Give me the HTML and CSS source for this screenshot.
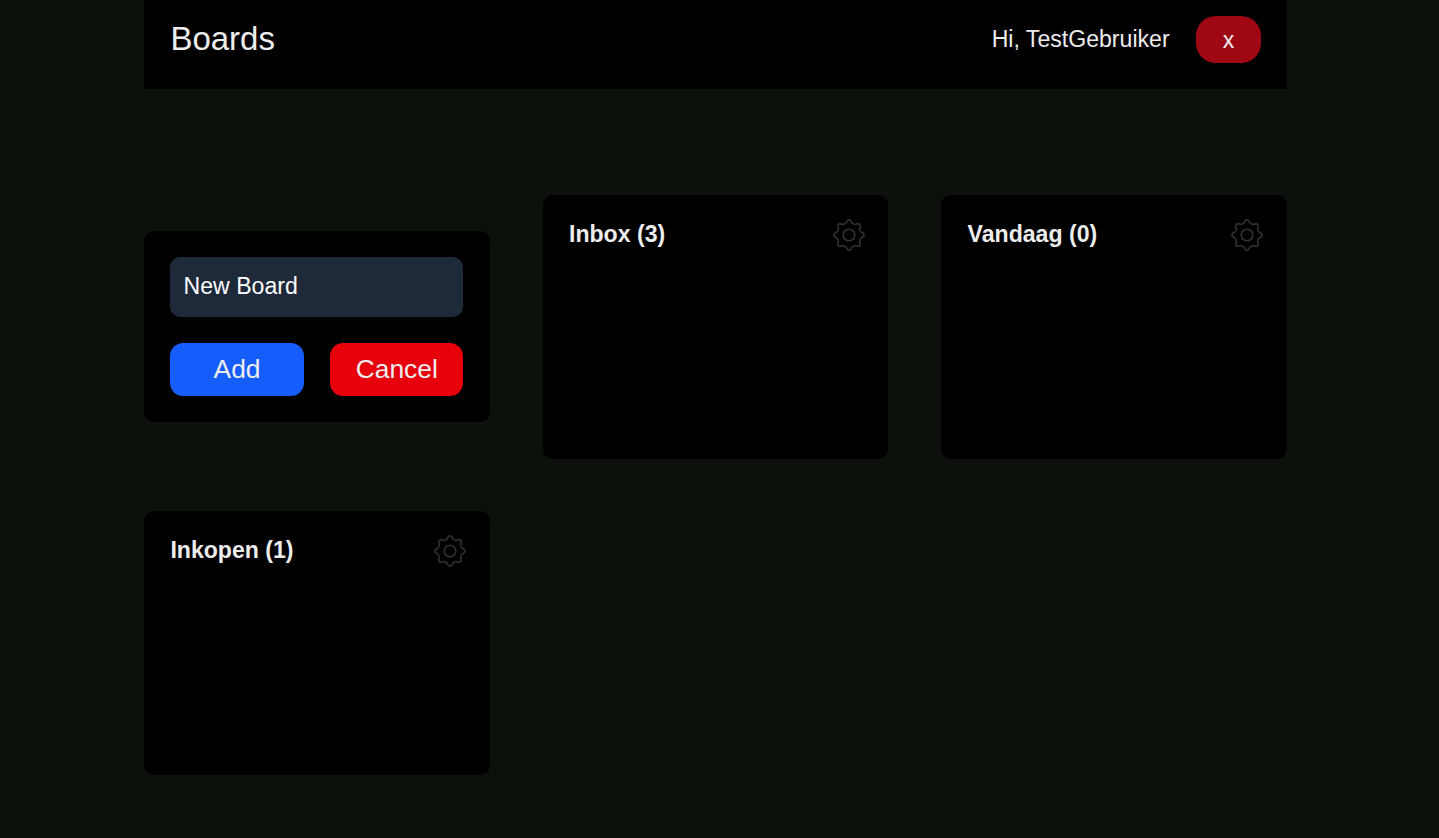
FILE: index.html
```html
<!DOCTYPE html>
<html lang="nl">
<head>
<meta charset="utf-8">
<title>Boards</title>
<link rel="stylesheet" href="styles.css">
</head>
<body>
<svg class="sprite" aria-hidden="true">
  <defs>
    <path id="tooth" d="M-4.55-10.98C-3.4-11.45-2.75-12.1-2.25-13.4Q-1.5-15.1 0-15.1Q1.5-15.1 2.25-13.4C2.75-12.1 3.4-11.45 4.55-10.98"/>
    <symbol id="gear" viewBox="-17 -17 34 34">
      <circle r="5.8"/>
      <use href="#tooth"/>
      <use href="#tooth" transform="rotate(45)"/>
      <use href="#tooth" transform="rotate(90)"/>
      <use href="#tooth" transform="rotate(135)"/>
      <use href="#tooth" transform="rotate(180)"/>
      <use href="#tooth" transform="rotate(225)"/>
      <use href="#tooth" transform="rotate(270)"/>
      <use href="#tooth" transform="rotate(315)"/>
    </symbol>
  </defs>
</svg>
<div class="page">
  <header class="header">
    <h1 class="title">Boards</h1>
    <div class="user">
      <span>Hi, TestGebruiker</span>
      <button class="logout">x</button>
    </div>
  </header>
  <main class="boards">
    <form class="card new-board">
      <input class="name" type="text" value="New Board">
      <div class="actions">
        <button class="button add" type="button">Add</button>
        <button class="button cancel" type="button">Cancel</button>
      </div>
    </form>
    <section class="card board">
      <h2 class="board-title">Inbox (3)</h2>
      <svg class="gear"><use href="#gear"/></svg>
    </section>
    <section class="card board">
      <h2 class="board-title">Vandaag (0)</h2>
      <svg class="gear"><use href="#gear"/></svg>
    </section>
    <section class="card board">
      <h2 class="board-title">Inkopen (1)</h2>
      <svg class="gear"><use href="#gear"/></svg>
    </section>
  </main>
</div>
</body>
</html>
```
FILE: styles.css
```css
* {
  box-sizing: border-box;
  margin: 0;
}

body {
  min-height: 100vh;
  background: #0c110c;
  color: #ededed;
  font-family: "Liberation Sans", Arial, sans-serif;
}

button,
input {
  border: 0;
  color: inherit;
  font-family: inherit;
}

.sprite {
  display: block;
  width: 0;
  height: 0;
}

.page {
  width: 1143px;
  margin-left: 144px;
}

.header {
  display: flex;
  justify-content: space-between;
  height: 89px;
  padding: 16px 26.4px 0;
  background: #000;
}

.title {
  font-size: 33px;
  font-weight: 400;
  line-height: 46px;
}

.user {
  display: flex;
  gap: 26px;
  font-size: 23.1px;
  line-height: 46px;
}

.logout {
  width: 65px;
  height: 47px;
  padding: 2px 0 0 1px;
  border-radius: 20px;
  background: #9f0712;
  font-size: 23.1px;
}

.boards {
  display: grid;
  grid-template-columns: repeat(3, 1fr);
  gap: 52px 52.8px;
  align-items: center;
  padding-top: 106px;
}

.card {
  border-radius: 10px;
  background: #000;
}

.new-board {
  display: grid;
  gap: 26px;
  margin-bottom: 1px;
  padding: 26px 26.4px;
}

.name {
  width: 100%;
  height: 60px;
  padding: 0 13.2px 2px;
  border-radius: 10px;
  background: #1e2939;
  color: #fff;
  font-size: 23.1px;
}

.actions {
  display: grid;
  grid-template-columns: 1fr 1fr;
  gap: 26.4px;
}

.button {
  height: 53px;
  padding: 0 0 1px;
  border-radius: 13.2px;
  font-size: 26.4px;
}

.add {
  background: #155dfc;
}

.cancel {
  background: #e7000b;
}

.board {
  display: flex;
  justify-content: space-between;
  height: 264px;
  padding: 22.5px 22.7px 0 26.4px;
}

.board-title {
  font-size: 23.1px;
  font-weight: 700;
  line-height: 33px;
}

.gear {
  width: 34px;
  height: 34px;
  fill: none;
  stroke: #313131;
  stroke-width: 1.6;
  stroke-linejoin: round;
}
```
